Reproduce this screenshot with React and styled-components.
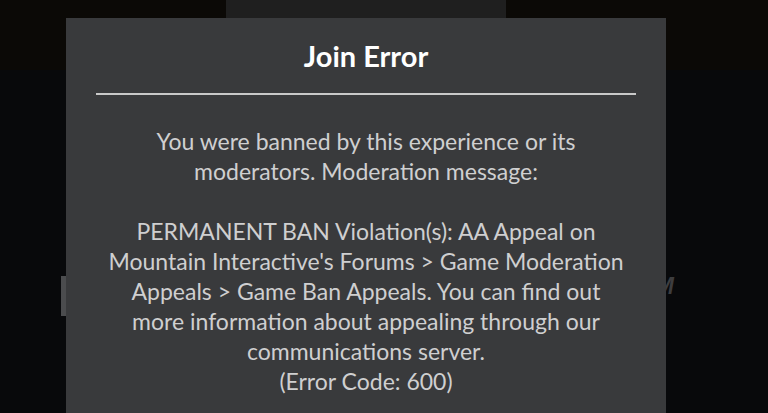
import React from "react";
import styled, { createGlobalStyle } from "styled-components";

const Global = createGlobalStyle`
  html, body { margin: 0; padding: 0; background: #08090b; }
  body { width: 768px; height: 413px; overflow: hidden; }
`;

const Screen = styled.div`
  position: relative;
  width: 768px;
  height: 413px;
  overflow: hidden;
  background: #08090b;
  display: flex;
  flex-direction: column;
  font-family: "Lato", "Liberation Sans", sans-serif;
`;

const TopBand = styled.div`
  display: flex;
  height: 70px;
`;

const TopSeg = styled.div`
  flex: ${(p) => p.$grow};
  background: ${(p) => p.$bg};
  align-self: flex-start;
  height: ${(p) => p.$h}px;
`;

const Middle = styled.div`
  display: flex;
  justify-content: space-between;
  align-items: flex-start;
  padding: 206px 94px 0 61px;
`;

const SideBar = styled.div`
  width: 5px;
  height: 40px;
  background: #4b4c4e;
`;

const GhostLetter = styled.div`
  font-family: "Liberation Sans", Arial, sans-serif;
  font-weight: 700;
  font-style: italic;
  font-size: 23px;
  line-height: 20px;
  color: #3d3d3f;
`;

const Modal = styled.div`
  position: absolute;
  left: 66px;
  top: 18px;
  width: 600px;
  height: 420px;
  background: #393a3c;
  box-sizing: border-box;
  padding: 0 30px;
  display: flex;
  flex-direction: column;
  align-items: stretch;
`;

const Title = styled.h1`
  margin: 0;
  height: 75px;
  display: flex;
  align-items: center;
  justify-content: center;
  font-size: 29px;
  font-weight: 700;
  color: #ffffff;
  letter-spacing: 0;
`;

const Divider = styled.hr`
  margin: 0;
  border: 0;
  height: 2px;
  background: #c9c9c9;
`;

const Body = styled.div`
  padding-top: 31px;
  display: flex;
  flex-direction: column;
  gap: 30px;
`;

const Paragraph = styled.p`
  margin: 0;
  text-align: center;
  font-size: 23px;
  line-height: 30px;
  color: #cfcfd0;
`;

export default function App() {
  return (
    <>
      <Global />
      <Screen>
        <TopBand>
          <TopSeg $grow={226} $bg="#0b0906" $h={70} />
          <TopSeg $grow={280} $bg="#1f1f1f" $h={18} />
          <TopSeg $grow={262} $bg="#0b0906" $h={70} />
        </TopBand>
        <Middle>
          <SideBar />
          <GhostLetter>M</GhostLetter>
        </Middle>
        <Modal>
          <Title>Join Error</Title>
          <Divider />
          <Body>
            <Paragraph>
              You were banned by this experience or its
              <br />
              moderators. Moderation message:
            </Paragraph>
            <Paragraph>
              PERMANENT BAN Violation(s): AA Appeal on
              <br />
              Mountain Interactive's Forums &gt; Game Moderation
              <br />
              Appeals &gt; Game Ban Appeals. You can find out
              <br />
              more information about appealing through our
              <br />
              communications server.
              <br />
              (Error Code: 600)
            </Paragraph>
          </Body>
        </Modal>
      </Screen>
    </>
  );
}
